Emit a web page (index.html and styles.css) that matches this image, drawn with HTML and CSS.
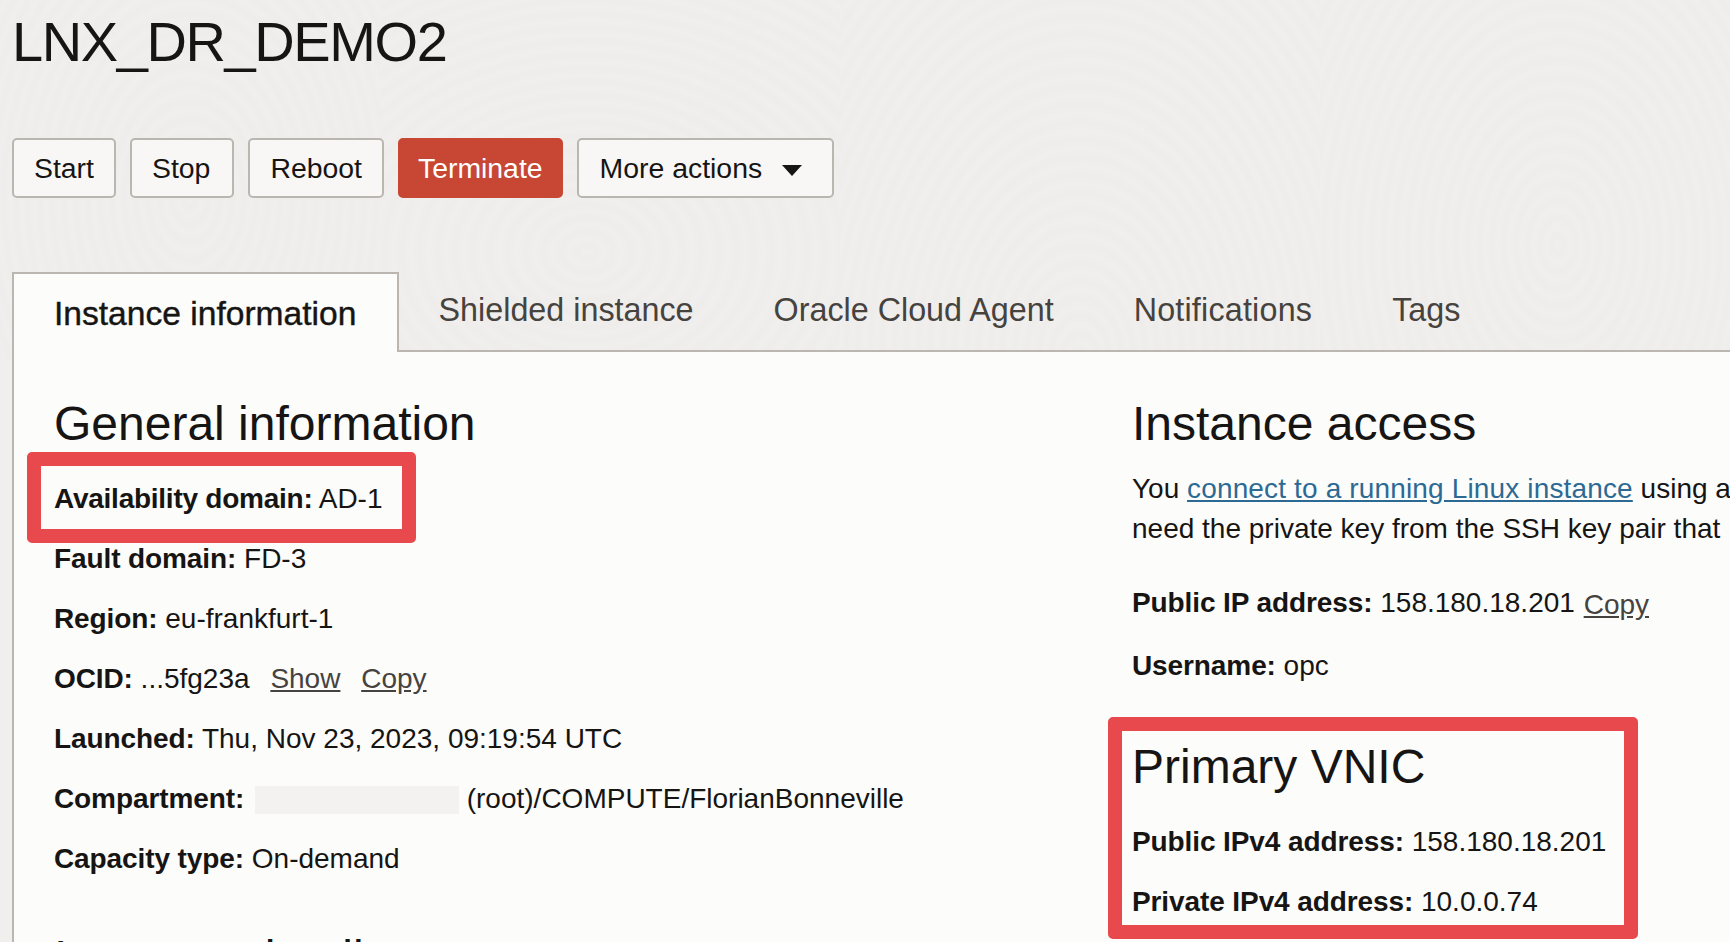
FILE: index.html
```html
<!DOCTYPE html>
<html lang="en">
<head>
<meta charset="UTF-8">
<meta name="viewport" content="width=device-width, initial-scale=1.0">
<title>LNX_DR_DEMO2</title>
<link rel="stylesheet" href="styles.css">
</head>
<body>
<div class="page">
  <h1>LNX_DR_DEMO2</h1>

  <div class="actions">
    <button class="btn" type="button">Start</button>
    <button class="btn btn-stop" type="button">Stop</button>
    <button class="btn" type="button">Reboot</button>
    <button class="btn btn-danger" type="button">Terminate</button>
    <button class="btn btn-menu" type="button">More actions <span class="caret"></span></button>
  </div>

  <div class="tabs">
    <a class="tab active" href="#">Instance information</a>
    <a class="tab" href="#">Shielded instance</a>
    <a class="tab" href="#">Oracle Cloud Agent</a>
    <a class="tab tab-wide" href="#">Notifications</a>
    <a class="tab" href="#">Tags</a>
  </div>

  <div class="panel">
    <div class="col-left">
      <h2>General information</h2>
      <div class="row first tight">
        <b>Availability domain:</b> AD-1
        <span class="mark mark-domain"></span>
      </div>
      <div class="row"><b>Fault domain:</b> FD-3</div>
      <div class="row"><b>Region:</b> eu-frankfurt-1</div>
      <div class="row"><b>OCID:</b> ...5fg23a <a class="action" href="#">Show</a> <a class="action" href="#">Copy</a></div>
      <div class="row"><b>Launched:</b> Thu, Nov 23, 2023, 09:19:54 UTC</div>
      <div class="row"><b>Compartment:</b> <span class="redacted"></span> (root)/COMPUTE/FlorianBonneville</div>
      <div class="row"><b>Capacity type:</b> On-demand</div>
      <h2 class="next">Instance details</h2>
    </div>

    <div class="col-right">
      <h2>Instance access</h2>
      <p class="intro">You <a class="link" href="#">connect to a running Linux instance</a> using a<br>need the private key from the SSH key pair that</p>
      <div class="row"><b>Public IP address:</b> 158.180.18.201 <a class="action copy" href="#">Copy</a></div>
      <div class="row user"><b>Username:</b> opc</div>

      <div class="vnic">
        <span class="mark mark-vnic"></span>
        <h2>Primary VNIC</h2>
        <div class="row first"><b>Public IPv4 address:</b> 158.180.18.201</div>
        <div class="row"><b>Private IPv4 address:</b> 10.0.0.74</div>
      </div>
    </div>
  </div>
</div>
</body>
</html>
```

FILE: styles.css
```css
html, body {
  margin: 0;
  height: 100%;
  overflow: hidden;
}
body {
  font-family: "Liberation Sans", Arial, sans-serif;
  color: #161513;
  background-color: #f1efed;
  /* faint fingerprint whorls behind the header */
  --ring: rgba(120, 110, 100, 0.02);
  background-image:
    repeating-radial-gradient(ellipse 150px 220px at 50% 55%, transparent 0, var(--ring) 4%, transparent 8%),
    repeating-radial-gradient(ellipse 220px 170px at 45% 70%, transparent 0, var(--ring) 4%, transparent 8%),
    repeating-radial-gradient(ellipse 150px 220px at 50% 100%, transparent 0, var(--ring) 4%, transparent 8%),
    repeating-radial-gradient(ellipse 150px 220px at 58% 68%, transparent 0, var(--ring) 4%, transparent 8%);
  background-size: 380px 360px, 460px 360px, 480px 360px, 410px 360px;
  background-position: 0 0, 380px 0, 840px 0, 1320px 0;
  background-repeat: no-repeat;
}
.page {
  width: 1730px;
  height: 942px;
  padding: 10px 0 0 12px;
  box-sizing: border-box;
  overflow: hidden;
}
h1 {
  margin: 0;
  font-size: 56px;
  font-weight: 400;
  line-height: 64px;
  letter-spacing: -1.4px;
}
.actions {
  display: flex;
  gap: 14px;
  margin-top: 64px;
}
.btn {
  height: 60px;
  padding: 0 20px;
  font-family: inherit;
  font-size: 28.4px;
  color: #161513;
  background-color: #f8f7f6;
  border: 2px solid #bcb6b1;
  border-radius: 5px;
}
.btn-stop {
  padding-right: 22px;
}
.btn-danger {
  padding: 0 18px;
  color: #fff;
  background-color: #c74634;
  border-color: #c74634;
}
.btn-menu {
  padding-left: 21px;
  padding-right: 30px;
}
.caret {
  display: inline-block;
  width: 0;
  height: 0;
  margin-left: 12px;
  vertical-align: middle;
  border-left: 10px solid transparent;
  border-right: 10px solid transparent;
  border-top: 11px solid #161513;
}
.tabs {
  display: flex;
  width: 1718px;
  height: 80px;
  margin-top: 74px;
  border-bottom: 2px solid #bcb6b1;
  box-sizing: border-box;
}
.tab {
  padding: 20px 40px 0;
  font-size: 32.3px;
  color: #46433f;
  text-decoration: none;
}
.tab-wide {
  letter-spacing: 0.2px;
}
.active {
  height: 80px;
  box-sizing: border-box;
  padding: 21px 40.2px 0 40px;
  color: #161513;
  font-size: 33.6px;
  -webkit-text-stroke: 0.4px #161513;
  background-color: #fcfcfb;
  border: 2px solid #bcb6b1;
  border-bottom: none;
}
.panel {
  display: flex;
  height: 600px;
  background-color: #fcfcfb;
  border-left: 2px solid #bcb6b1;
}
.col-left {
  flex: none;
  width: 1118px;
  padding: 44px 0 0 40px;
  box-sizing: border-box;
}
.col-right {
  padding-top: 44px;
  white-space: nowrap;
}
h2 {
  margin: 0;
  font-size: 48px;
  font-weight: 400;
  line-height: 56px;
}
.row {
  position: relative;
  font-size: 28px;
  line-height: 32px;
  margin-top: 28px;
  white-space: nowrap;
}
.row.first {
  margin-top: 31px;
}
.row b {
  font-weight: 700;
  letter-spacing: -0.1px;
}
.row.tight b {
  letter-spacing: -0.25px;
}
.action {
  margin-left: 13px;
  color: #46433f;
}
.copy {
  position: relative;
  top: 2px;
  margin-left: 1px;
}
.link {
  color: #2c6a94;
  letter-spacing: 0.15px;
}
.redacted {
  display: inline-block;
  width: 204px;
  height: 28px;
  margin-left: 3px;
  vertical-align: -6px;
  background-color: #f3f2f1;
}
.next {
  margin-top: 55px;
}
.intro {
  margin: 17px 0 0;
  font-size: 28px;
  line-height: 40px;
}
.col-right .row {
  margin-top: 38px;
}
.col-right .user {
  margin-top: 31px;
}
.vnic {
  position: relative;
  margin-top: 57px;
}
.col-right .vnic .row {
  margin-top: 28px;
}
.col-right .vnic .row.first {
  margin-top: 31px;
}
/* red annotation boxes drawn over the screenshot */
.mark {
  position: absolute;
  box-sizing: border-box;
  border: 14px solid #e8494d;
  border-radius: 5px;
}
.mark-domain {
  left: -27px;
  top: -31px;
  width: 389px;
  height: 91px;
}
.mark-vnic {
  left: -24px;
  top: -22px;
  width: 530px;
  height: 222px;
}
```
